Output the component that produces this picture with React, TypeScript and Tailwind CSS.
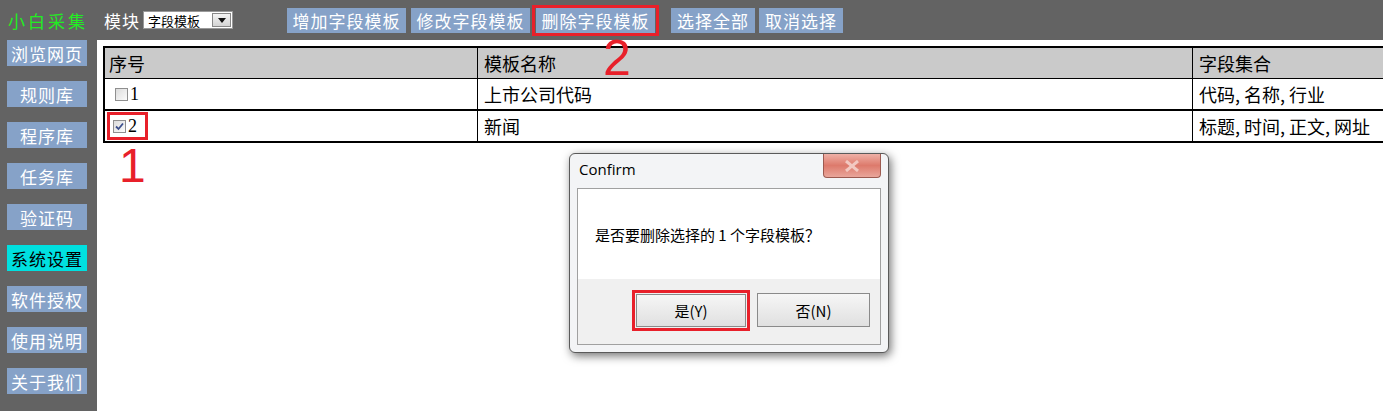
const navItems = ['浏览网页', '规则库', '程序库', '任务库', '验证码', '系统设置', '软件授权', '使用说明', '关于我们'];

const rows = [
  { id: '1', name: '上市公司代码', fields: '代码, 名称, 行业', checked: false },
  { id: '2', name: '新闻', fields: '标题, 时间, 正文, 网址', checked: true },
];

function Checkbox({ checked }: { checked: boolean }) {
  return (
    <span className="inline-flex h-[13px] w-[13px] items-center justify-center border border-[#8f8f8f] bg-gradient-to-br from-[#dcdcdc] to-[#fbfbfb]">
      {checked && (
        <svg width="9" height="9" viewBox="0 0 9 9">
          <path d="M1 4.5 L3.5 7 L8 1.5" fill="none" stroke="#3c4f8c" strokeWidth="1.8" />
        </svg>
      )}
    </span>
  );
}

function TopButton({ label, wide = true }: { label: string; wide?: boolean }) {
  return (
    <div
      className={
        'flex h-[25px] items-center justify-center bg-[#86a2c8] text-[17px] leading-none tracking-[1px] text-white ' +
        (wide ? 'w-[119px]' : 'w-[84px]')
      }
    >
      {label}
    </div>
  );
}

export default function App() {
  return (
    <div className="relative flex h-[411px] w-[1383px] flex-col overflow-hidden bg-[#636363] font-['Noto_Sans_CJK_SC',sans-serif]">
      {/* top bar */}
      <div className="flex h-[40px] shrink-0 items-center">
        <span className="ml-[8px] w-[80px] text-[17px] leading-none tracking-[3px] text-[#22ee22]">小白采集</span>
        <span className="ml-[16px] w-[36px] text-[17px] leading-none tracking-[1px] text-white">模块</span>
        <div className="ml-[3px] flex h-[18px] w-[90px] items-center border border-[#999] bg-white">
          <span className="flex-1 pl-[4px] text-[13px] leading-none text-black">字段模板</span>
          <div className="mr-[1px] flex h-[14px] w-[19px] items-center justify-center border border-[#888] bg-gradient-to-b from-[#f4f4f4] to-[#d4d4d4]">
            <svg width="8" height="5" viewBox="0 0 8 5">
              <path d="M0 0 H8 L4 5 Z" fill="#111" />
            </svg>
          </div>
        </div>
        <div className="ml-[54px] flex items-center">
          <TopButton label="增加字段模板" />
          <div className="ml-[5px]">
            <TopButton label="修改字段模板" />
          </div>
          <div className="ml-[2px] border-[3px] border-[#e8202a] px-[1px]">
            <TopButton label="删除字段模板" />
          </div>
          <div className="ml-[12px]">
            <TopButton label="选择全部" wide={false} />
          </div>
          <div className="ml-[4px]">
            <TopButton label="取消选择" wide={false} />
          </div>
        </div>
      </div>

      <div className="flex flex-1">
        {/* sidebar */}
        <div className="flex w-[97px] shrink-0 flex-col gap-[15px] pl-[7px]">
          {navItems.map((item) => (
            <div
              key={item}
              className={
                'flex h-[26px] w-[80px] items-center justify-center text-[17px] leading-none tracking-[1px] ' +
                (item === '系统设置' ? 'bg-[#00e0e0] text-black' : 'bg-[#86a2c8] text-white')
              }
            >
              {item}
            </div>
          ))}
        </div>

        {/* main */}
        <div className="flex-1 overflow-hidden bg-white pl-[6px] pt-[6px]">
          <div className="w-[1300px] border-t-2 border-l-2 border-black text-[18px] leading-none text-black">
            <div className="flex h-[31px] items-center border-b border-black bg-[#cacaca]">
              <div className="flex h-full w-[373px] items-center border-r border-black pl-[4px]">序号</div>
              <div className="flex h-full w-[715px] items-center border-r border-black pl-[6px]">模板名称</div>
              <div className="flex h-full flex-1 items-center pl-[6px]">字段集合</div>
            </div>
            {rows.map((r) => (
              <div key={r.id} className="flex h-[32px] items-center border-b-2 border-black">
                <div className="flex h-full w-[373px] items-center border-r border-black pl-[8px]">
                  <div
                    className={
                      'flex items-center gap-[2px] py-[2px] ' +
                      (r.checked ? '-ml-[6px] border-[3px] border-[#e8202a] pl-[3px] pr-[8px]' : 'px-[2px]')
                    }
                  >
                    <Checkbox checked={r.checked} />
                    <span className="font-['Liberation_Serif',serif] text-[18px]">{r.id}</span>
                  </div>
                </div>
                <div className="flex h-full w-[715px] items-center border-r border-black pl-[6px]">{r.name}</div>
                <div className="flex h-full flex-1 items-center pl-[6px]">{r.fields}</div>
              </div>
            ))}
          </div>
        </div>
      </div>

      {/* annotations */}
      <span className="absolute left-[119px] top-[142px] font-['Liberation_Sans',sans-serif] text-[48px] leading-none text-[#e8202a]">1</span>
      <span className="absolute left-[603px] top-[33px] font-['Liberation_Sans',sans-serif] text-[50px] leading-none text-[#e8202a]">2</span>
      <span className="absolute left-[591px] top-[284px] font-['Liberation_Sans',sans-serif] text-[48px] leading-none text-[#e8202a]">3</span>

      {/* confirm dialog */}
      <div className="absolute left-[569px] top-[153px] flex h-[200px] w-[320px] flex-col rounded-[6px] border border-[#5a5a5a] bg-[#f3f4f6] shadow-[2px_3px_10px_rgba(0,0,0,0.55)]">
        <div className="flex h-[34px] items-start">
          <span className="ml-[9px] mt-[8px] font-['Open_Sans',sans-serif] text-[15px] leading-none text-black">Confirm</span>
          <div className="ml-auto mr-[7px] flex h-[24px] w-[58px] items-center justify-center rounded-b-[4px] border border-t-0 border-[#9c5a50] bg-gradient-to-b from-[#eeb0a6] via-[#dd7a6c] to-[#e9a69b]">
            <svg width="16" height="12" viewBox="0 0 16 12">
              <path d="M2 1 L14 11 M14 1 L2 11" stroke="#f2c9c1" strokeWidth="3" />
            </svg>
          </div>
        </div>
        <div className="mx-[7px] flex h-[157px] flex-col border border-[#a0a0a0]">
          <div className="flex h-[90px] items-center bg-white pl-[17px] text-[15px] leading-none text-black">
            是否要删除选择的 1 个字段模板？
          </div>
          <div className="flex flex-1 items-start bg-[#f0f0f0] pt-[11px]">
            <div className="ml-[54px] border-[3px] border-[#e8202a] p-[1px]">
              <div className="flex h-[33px] w-[110px] items-center justify-center border border-[#8a8a8a] bg-gradient-to-b from-[#f6f6f6] to-[#e0e0e0] text-[15px] leading-none text-black">
                是(Y)
              </div>
            </div>
            <div className="ml-[7px] mt-[3px] flex h-[34px] w-[113px] items-center justify-center border border-[#8a8a8a] bg-gradient-to-b from-[#f6f6f6] to-[#e0e0e0] text-[15px] leading-none text-black">
              否(N)
            </div>
          </div>
        </div>
      </div>
    </div>
  );
}
